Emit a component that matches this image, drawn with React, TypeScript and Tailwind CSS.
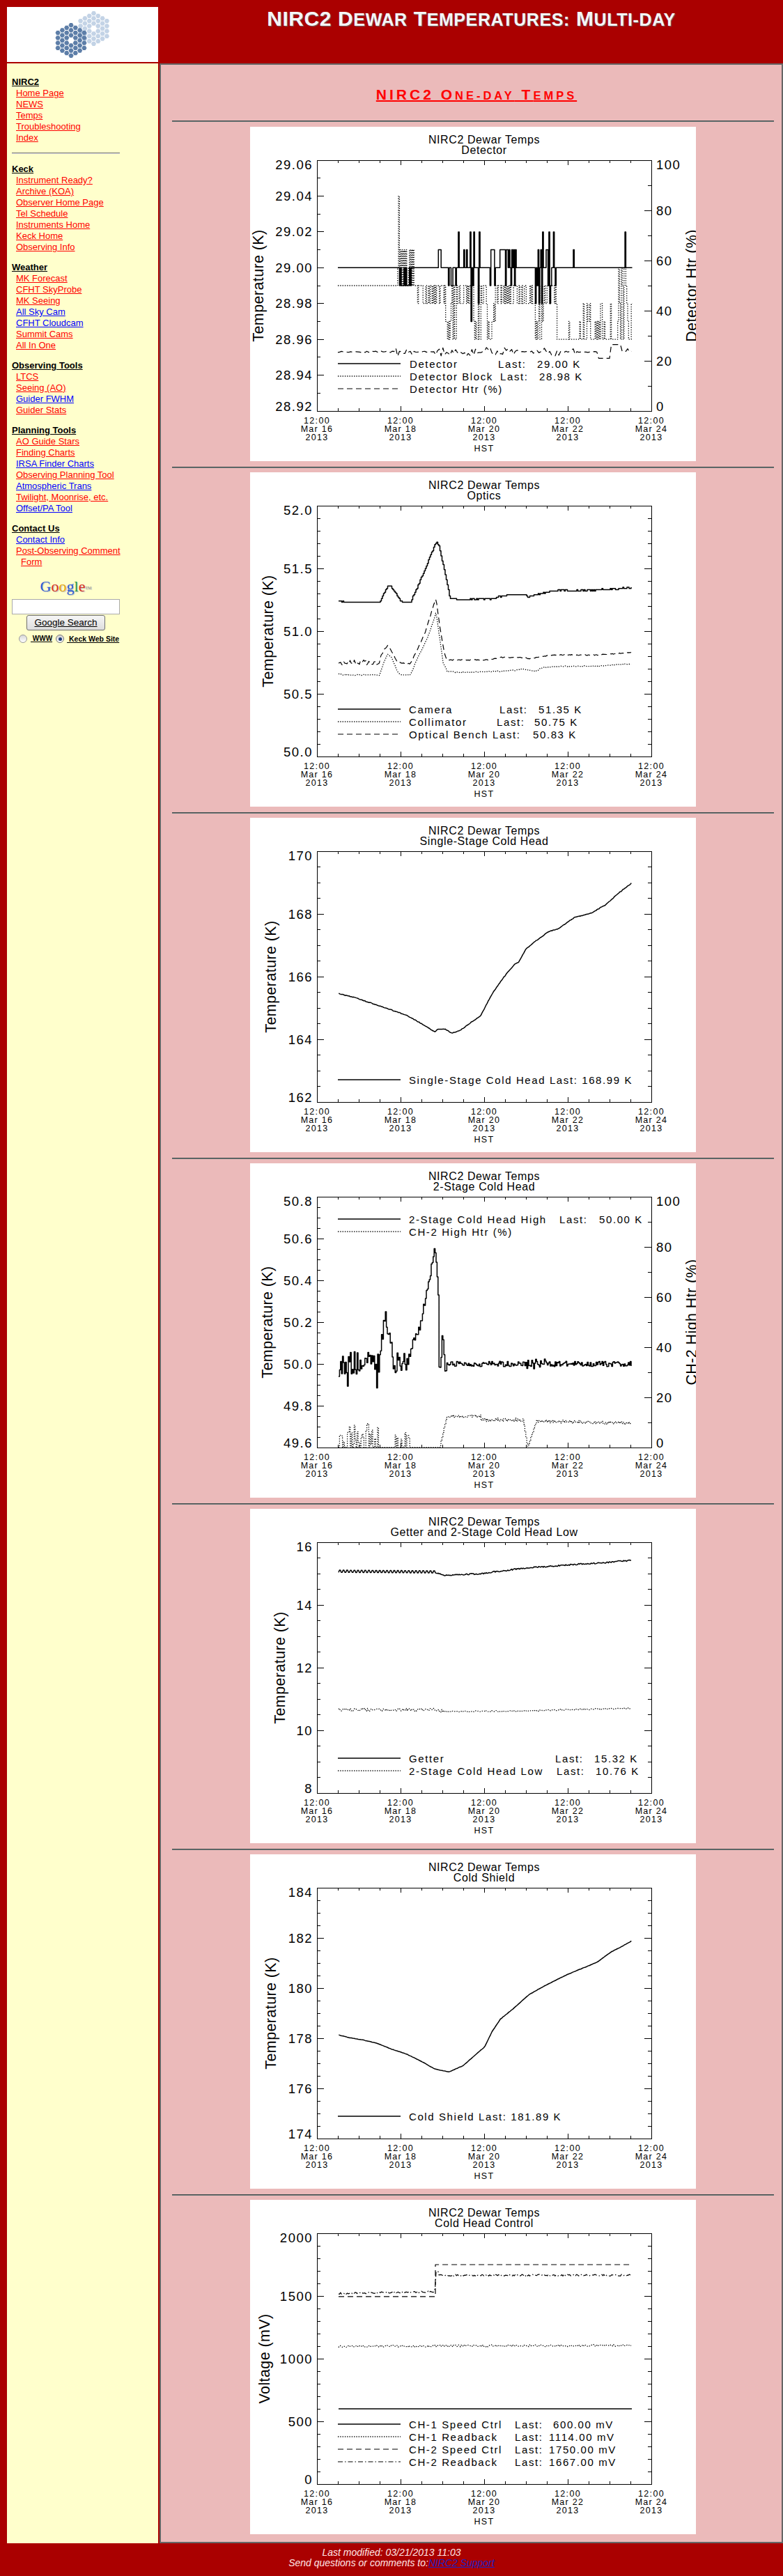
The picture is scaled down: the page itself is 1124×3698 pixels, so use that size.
import React from "react";

const SANS = "'Liberation Sans', Arial, sans-serif";

type P = [number, number];
type St = "s" | "dot" | "dash" | "dd";

const DASH: Record<St, string | undefined> = { s: undefined, dot: "1.3 2", dash: "8 5", dd: "7 3 1.5 3" };
const SW: Record<St, number> = { s: 1.5, dot: 1.3, dash: 1.2, dd: 1.2 };

function rnd(seed: number) {
  let s = seed;
  return () => {
    s = (s * 16807) % 2147483647;
    return (s - 1) / 2147483646;
  };
}

function interp(k: P[], x: number) {
  if (x <= k[0][0]) return k[0][1];
  for (let i = 1; i < k.length; i++) {
    if (x <= k[i][0]) {
      const [x0, y0] = k[i - 1];
      const [x1, y1] = k[i];
      return y0 + ((y1 - y0) * (x - x0)) / (x1 - x0);
    }
  }
  return k[k.length - 1][1];
}

const path = (pts: P[]) =>
  pts.map((p, i) => (i ? "L" : "M") + p[0].toFixed(1) + " " + p[1].toFixed(1)).join("");

const steps = (pts: P[]) => {
  let d = `M${pts[0][0].toFixed(1)} ${pts[0][1].toFixed(1)}`;
  for (let i = 1; i < pts.length; i++) d += `H${pts[i][0].toFixed(1)}V${pts[i][1].toFixed(1)}`;
  return d;
};

const ym = (lo: number, hi: number) => (v: number) => 408 - ((v - lo) / (hi - lo)) * 360;
const pct = (p: number) => 408 - p * 3.6;

function sample(k: P[], step: number, noise: (x: number) => number, map: (v: number) => number): P[] {
  const out: P[] = [];
  for (let x = k[0][0]; x <= k[k.length - 1][0] + 0.01; x += step) out.push([x, map(interp(k, x) + noise(x))]);
  return out;
}

type Series = { d: string; st: St };

// ---------- chart data ----------

function detector(): Series[] {
  const r = rnd(11);
  const y = ym(28.92, 29.06);
  const pick = (a: number[]) => a[Math.floor(r() * a.length)];
  const win: [number, number, number, number[]][] = [
    [211, 231, 0.6, [28.99]],
    [270, 273, 0.9, [29.01]],
    [279, 303, 0.55, [28.99, 28.99, 28.98, 29.01, 29.02]],
    [305, 330, 0.55, [29.01, 29.02, 28.99, 28.98, 28.97]],
    [342, 381, 0.6, [29.01, 29.01, 28.99]],
    [407, 440, 0.5, [28.99, 28.98, 29.01, 29.02, 28.99]],
    [463, 465, 1, [29.01]],
    [537, 539, 1, [29.02]],
  ];
  const det: P[] = [];
  const blk: P[] = [];
  const htr: P[] = [];
  for (let x = 126; x <= 549; x += 1.3) {
    let v = 29.0;
    for (const [a, b, p, o] of win) if (x >= a && x <= b && r() < p) v = pick(o);
    det.push([x, y(v)]);

    let w: number;
    if (x < 240) {
      w = 28.99;
      if (x >= 211 && x <= 236 && r() < 0.55) w = pick([29.0, 29.01, 29.02, 29.01]);
      if (x > 212 && x < 214) w = 29.04;
    } else if (x < 440) {
      w = r() < 0.5 ? 28.98 : 28.99;
      const deep = (x > 280 && x < 296) || (x > 318 && x < 332) || (x > 340 && x < 352) || (x > 408 && x < 420);
      if (deep && r() < 0.6) w = pick([28.96, 28.97]);
    } else {
      w = 28.96;
      if (r() < 0.22) w = pick([28.97, 28.98]);
      if (x > 528 && x < 541 && r() < 0.7) w = pick([28.98, 28.99, 29.0]);
    }
    blk.push([x, y(w)]);

    let h = 23.6 + (r() - 0.5) * 0.5;
    if (win.some(([a, b]) => x >= a - 4 && x <= b + 4)) h += (r() - 0.5) * 3.5;
    if (x > 500 && x < 517) h = 21;
    if (x >= 517 && x < 532) h = 26.5;
    htr.push([x, pct(h)]);
  }
  return [
    { d: steps(det), st: "s" },
    { d: steps(blk), st: "dot" },
    { d: path(htr.filter((_, i) => i % 2 === 0)), st: "dash" },
  ];
}

function optics(): Series[] {
  const r = rnd(5);
  const y = ym(50, 52);
  const q = (v: number) => y(Math.round(v * 100) / 100);
  const cam: P[] = [[127, 51.24], [140, 51.23], [186, 51.23], [192, 51.3], [198, 51.37], [203, 51.35], [212, 51.27], [218, 51.23], [230, 51.23], [240, 51.35], [255, 51.55], [263, 51.66], [267, 51.71], [271, 51.68], [280, 51.45], [287, 51.26], [300, 51.25], [348, 51.26], [354, 51.27], [370, 51.29], [395, 51.29], [400, 51.27], [403, 51.28], [424, 51.31], [448, 51.33], [460, 51.32], [500, 51.33], [548, 51.345]];
  const col: P[] = [[127, 50.66], [135, 50.65], [186, 50.65], [192, 50.75], [198, 50.82], [204, 50.78], [212, 50.67], [218, 50.65], [230, 50.65], [240, 50.78], [255, 50.95], [263, 51.08], [267, 51.15], [272, 50.95], [277, 50.75], [283, 50.68], [300, 50.67], [360, 50.68], [385, 50.69], [393, 50.7], [400, 50.69], [410, 50.68], [420, 50.71], [450, 50.72], [500, 50.72], [548, 50.74]];
  const ben: P[] = [[127, 50.75], [185, 50.75], [192, 50.85], [198, 50.89], [205, 50.82], [212, 50.75], [230, 50.74], [240, 50.85], [252, 51.0], [263, 51.2], [267, 51.26], [272, 51.05], [278, 50.85], [282, 50.77], [340, 50.77], [350, 50.78], [360, 50.79], [395, 50.79], [400, 50.78], [410, 50.79], [420, 50.8], [440, 50.81], [500, 50.81], [548, 50.83]];
  return [
    { d: steps(sample(cam, 1.5, () => (r() - 0.5) * 0.01, q)), st: "s" },
    { d: path(sample(col, 1.5, () => (r() - 0.5) * 0.008, y)), st: "dot" },
    { d: path(sample(ben, 1.5, (x) => (x < 190 ? (r() - 0.5) * 0.04 : (r() - 0.5) * 0.008), y)), st: "dash" },
  ];
}

function singleStage(): Series[] {
  const r = rnd(21);
  const k: P[] = [[127.3, 252.3], [150, 258], [183.7, 269.3], [224.5, 283.3], [245, 295], [265.3, 307.3], [269.4, 303.3], [279.6, 303.3], [289.8, 309.3], [302, 305], [318.4, 292.7], [330.6, 285], [347, 253.3], [363.3, 230], [379.6, 210], [385.7, 207], [396, 188.3], [408.2, 178.3], [428.6, 163.3], [442.9, 159.3], [453, 151.7], [465.3, 143.3], [489.8, 136.7], [510.2, 125], [530.6, 106.7], [548.2, 93.3]];
  return [{ d: path(sample(k, 1.5, () => (r() - 0.5) * 0.9, (v) => v)), st: "s" }];
}

function twoStage(): Series[] {
  const r = rnd(3);
  const y = ym(49.6, 50.8);
  const k: P[] = [[127, 50.0], [185, 50.0], [190, 50.15], [194, 50.21], [200, 50.1], [205, 50.02], [228, 50.0], [232, 50.08], [245, 50.2], [255, 50.38], [262, 50.5], [265, 50.58], [268, 50.45], [270, 50.3], [271, 49.96], [273, 49.98], [275, 50.13], [277, 50.1], [280, 49.95], [283, 50.0], [548, 50.0]];
  const s = sample(k, 1.4, (x) => {
    if (x < 230) {
      let n = (r() - 0.5) * 0.12;
      if (r() < 0.08) n -= 0.1 * r();
      return n;
    }
    if (x < 285) return (r() - 0.5) * 0.05;
    if (x > 396 && x < 424) return (r() - 0.5) * 0.05;
    return (r() - 0.5) * 0.025;
  }, y);
  const h: P[] = [];
  for (let x = 127; x <= 548; x += 1.4) {
    let p = 0;
    if (x < 185) p = r() < 0.5 ? r() * 9.5 : 0;
    else if (x > 207 && x < 230) p = r() < 0.4 ? r() * 7.5 : 0;
    else if (x >= 272 && x < 282) p = ((x - 272) / 10) * 12.5;
    else if (x >= 282 && x < 330) p = 12.5 + (r() - 0.5) * 1;
    else if (x >= 330 && x < 392) p = 11 + (r() - 0.5) * 1.4;
    else if (x >= 392 && x < 398) p = 11 * (1 - (x - 392) / 6);
    else if (x >= 398 && x < 410) p = ((x - 398) / 12) * 10;
    else if (x >= 410) p = 10.6 - ((x - 410) / 138) * 1 + (r() - 0.5) * 1.2;
    h.push([x, pct(p)]);
  }
  return [
    { d: steps(s), st: "s" },
    { d: steps(h), st: "dot" },
  ];
}

function getter(): Series[] {
  const r = rnd(8);
  const y = ym(8, 16);
  const g: P[] = [[127, 15.07], [265, 15.05], [278, 14.95], [290, 14.96], [335, 15.0], [347, 15.05], [367, 15.1], [384, 15.15], [408, 15.2], [441, 15.25], [469, 15.3], [510, 15.35], [530, 15.4], [548, 15.42]];
  const l: P[] = [[127, 10.66], [265, 10.66], [280, 10.6], [400, 10.62], [440, 10.65], [548, 10.7]];
  return [
    { d: path(sample(g, 1.3, (x) => (x < 265 ? (Math.floor(x / 2.6) % 2 ? 0.04 : -0.03) : (r() - 0.5) * 0.04), y)), st: "s" },
    { d: path(sample(l, 1.3, (x) => (x < 280 ? (r() - 0.5) * 0.1 : (r() - 0.5) * 0.04), y)), st: "dot" },
  ];
}

function coldShield(): Series[] {
  const r = rnd(14);
  const k: P[] = [[127.3, 259.3], [142.9, 263.3], [163.3, 266.7], [183.7, 271.7], [204, 280], [224.5, 286.7], [245, 296.7], [265.3, 308.3], [285.7, 312.3], [306, 303.3], [326.5, 285], [336.7, 276.7], [347, 255], [359.2, 236.7], [379.6, 220], [400, 201.7], [420.4, 190], [436.7, 181.7], [457.1, 171.7], [473.5, 165], [498, 155], [518.4, 140], [534.7, 131.7], [548.2, 124]];
  return [{ d: path(sample(k, 2, () => (r() - 0.5) * 0.4, (v) => v)), st: "s" }];
}

function headControl(): Series[] {
  const r = rnd(9);
  const y = ym(0, 2000);
  const rb1: P[] = [];
  const rb2: P[] = [];
  for (let x = 127; x <= 548; x += 1.4) {
    rb1.push([x, y(1098 + (x - 127) * 0.02 + (r() - 0.5) * 16)]);
    const base = x < 266 ? 1520 + (x - 127) * 0.1 : 1665;
    rb2.push([x, y(base + (r() - 0.5) * 14 + (x > 265 && x < 270 ? 30 : 0))]);
  }
  return [
    { d: `M127 ${y(600)}H548`, st: "s" },
    { d: path(rb1), st: "dot" },
    { d: `M127 ${y(1495)}H266V${y(1750)}H548`, st: "dash" },
    { d: path(rb2), st: "dd" },
  ];
}

// ---------- plot ----------

type Leg = { st: St; y: number; t: [number, string][] };
type Cfg = {
  sub: string;
  yt: string;
  ytx: number;
  lo: number;
  hi: number;
  major: number;
  minor: number;
  fmt: (v: number) => string;
  rt?: string;
  legend: Leg[];
  data: Series[];
};

function T({ x, y, s, ls = 0, a = "start", rot, children }: { x: number; y: number; s: number; ls?: number; a?: "start" | "middle" | "end"; rot?: boolean; children: React.ReactNode }) {
  return (
    <text
      x={x}
      y={y}
      fontSize={s}
      textAnchor={a}
      fill="#000"
      style={{ letterSpacing: `${ls}px` }}
      transform={rot ? `rotate(-90 ${x} ${y})` : undefined}
    >
      {children}
    </text>
  );
}

function Plot({ c }: { c: Cfg }) {
  const n = Math.round((c.hi - c.lo) / c.minor);
  const per = Math.round(c.major / c.minor);
  let ticks = "";
  const ylabels: React.ReactNode[] = [];
  for (let i = 0; i <= n; i++) {
    const yy = 408 - (i / n) * 360;
    const maj = i % per === 0;
    const len = maj ? 10 : 5;
    ticks += `M96 ${yy.toFixed(1)}h${len}`;
    if (!c.rt) ticks += `M576 ${yy.toFixed(1)}h${-len}`;
    if (maj) {
      const by = i === 0 ? 408 : i === n ? 61.3 : yy + 6.6;
      ylabels.push(
        <T key={i} x={90} y={by} s={18.5} ls={1.5} a="end">
          {c.fmt(c.lo + i * c.minor)}
        </T>
      );
    }
  }
  const rlabels: React.ReactNode[] = [];
  if (c.rt) {
    for (let p = 0; p <= 100; p += 10) {
      const yy = pct(p);
      const maj = p % 20 === 0;
      ticks += `M576 ${yy.toFixed(1)}h${maj ? -10 : -5}`;
      if (maj) {
        const by = p === 0 ? 408 : p === 100 ? 61.3 : yy + 6.6;
        rlabels.push(
          <T key={p} x={583} y={by} s={18.5} ls={1.5}>
            {String(p)}
          </T>
        );
      }
    }
  }
  for (let k = 0; k <= 16; k++) {
    const x = 96 + 30 * k;
    const len = k % 4 === 0 ? 7 : 4;
    ticks += `M${x} 408v${-len}M${x} 48v${len}`;
  }
  const xl = [0, 1, 2, 3, 4];

  return (
    <svg width={640} height={480} className="mx-auto block bg-white" style={{ fontFamily: SANS }}>
      <T x={336} y={23.5} s={16} ls={0.6} a="middle">
        NIRC2 Dewar Temps
      </T>
      <T x={336} y={38.5} s={16} ls={0.6} a="middle">
        {c.sub}
      </T>
      <g shapeRendering="crispEdges" stroke="#000" strokeWidth={1} fill="none">
        <rect x={96} y={48} width={480} height={360} />
        <path d={ticks} />
      </g>
      {ylabels}
      {rlabels}
      {xl.map((k) => (
        <g key={k}>
          <T x={96 + 120 * k} y={426} s={12.5} ls={1.3} a="middle">
            12:00
          </T>
          <T x={96 + 120 * k} y={438} s={12.5} ls={1.3} a="middle">
            {`Mar ${16 + 2 * k}`}
          </T>
          <T x={96 + 120 * k} y={449.5} s={12.5} ls={1.3} a="middle">
            2013
          </T>
        </g>
      ))}
      <T x={336} y={466} s={12.5} ls={1.3} a="middle">
        HST
      </T>
      <T x={c.ytx} y={228} s={21.5} ls={0.4} a="middle" rot>
        {c.yt}
      </T>
      {c.rt && (
        <T x={641} y={228} s={21.5} ls={0.4} a="middle" rot>
          {c.rt}
        </T>
      )}
      <g fill="none" stroke="#000" strokeLinejoin="round">
        {c.data.map((s, i) => (
          <path key={i} d={s.d} strokeWidth={SW[s.st]} strokeDasharray={DASH[s.st]} />
        ))}
        {c.legend.map((l, i) => (
          <path key={i} d={`M126 ${l.y}H216`} strokeWidth={SW[l.st]} strokeDasharray={DASH[l.st]} />
        ))}
      </g>
      {c.legend.map((l, i) =>
        l.t.map(([x, s], j) => (
          <T key={`${i}-${j}`} x={x} y={l.y + 5.5} s={15} ls={1.6}>
            {s}
          </T>
        ))
      )}
    </svg>
  );
}

const f2 = (v: number) => v.toFixed(2);
const f1 = (v: number) => v.toFixed(1);
const f0 = (v: number) => String(Math.round(v));

const PLOTS: Cfg[] = [
  {
    sub: "Detector",
    yt: "Temperature (K)",
    ytx: 19,
    lo: 28.92,
    hi: 29.06,
    major: 0.02,
    minor: 0.01,
    fmt: f2,
    rt: "Detector Htr (%)",
    legend: [
      { st: "s", y: 340, t: [[229, "Detector"], [356, "Last:"], [412, "29.00 K"]] },
      { st: "dot", y: 358, t: [[229, "Detector Block"], [359, "Last:"], [415, "28.98 K"]] },
      { st: "dash", y: 376, t: [[229, "Detector Htr (%)"]] },
    ],
    data: detector(),
  },
  {
    sub: "Optics",
    yt: "Temperature (K)",
    ytx: 32.5,
    lo: 50,
    hi: 52,
    major: 0.5,
    minor: 0.1,
    fmt: f1,
    legend: [
      { st: "s", y: 340, t: [[228, "Camera"], [358, "Last:"], [414, "51.35 K"]] },
      { st: "dot", y: 358, t: [[228, "Collimator"], [354, "Last:"], [408, "50.75 K"]] },
      { st: "dash", y: 376, t: [[228, "Optical Bench"], [348, "Last:"], [406, "50.83 K"]] },
    ],
    data: optics(),
  },
  {
    sub: "Single-Stage Cold Head",
    yt: "Temperature (K)",
    ytx: 36.7,
    lo: 162,
    hi: 170,
    major: 2,
    minor: 0.5,
    fmt: f0,
    legend: [{ st: "s", y: 376, t: [[228, "Single-Stage Cold Head Last: 168.99 K"]] }],
    data: singleStage(),
  },
  {
    sub: "2-Stage Cold Head",
    yt: "Temperature (K)",
    ytx: 31.8,
    lo: 49.6,
    hi: 50.8,
    major: 0.2,
    minor: 0.05,
    fmt: f1,
    rt: "CH-2 High Htr (%)",
    legend: [
      { st: "s", y: 80, t: [[228, "2-Stage Cold Head High"], [444, "Last:"], [501, "50.00 K"]] },
      { st: "dot", y: 98, t: [[228, "CH-2 High Htr (%)"]] },
    ],
    data: twoStage(),
  },
  {
    sub: "Getter and 2-Stage Cold Head Low",
    yt: "Temperature (K)",
    ytx: 49.8,
    lo: 8,
    hi: 16,
    major: 2,
    minor: 0.5,
    fmt: f0,
    legend: [
      { st: "s", y: 358, t: [[228, "Getter"], [438, "Last:"], [494, "15.32 K"]] },
      { st: "dot", y: 376, t: [[228, "2-Stage Cold Head Low"], [440, "Last:"], [496, "10.76 K"]] },
    ],
    data: getter(),
  },
  {
    sub: "Cold Shield",
    yt: "Temperature (K)",
    ytx: 36.7,
    lo: 174,
    hi: 184,
    major: 2,
    minor: 0.5,
    fmt: f0,
    legend: [{ st: "s", y: 376, t: [[228, "Cold Shield Last: 181.89 K"]] }],
    data: coldShield(),
  },
  {
    sub: "Cold Head Control",
    yt: "Voltage (mV)",
    ytx: 27.7,
    lo: 0,
    hi: 2000,
    major: 500,
    minor: 100,
    fmt: f0,
    legend: [
      { st: "s", y: 322, t: [[228, "CH-1 Speed Ctrl"], [380, "Last:"], [435, "600.00 mV"]] },
      { st: "dot", y: 340, t: [[228, "CH-1 Readback"], [380, "Last:"], [429, "1114.00 mV"]] },
      { st: "dash", y: 358, t: [[228, "CH-2 Speed Ctrl"], [380, "Last:"], [429, "1750.00 mV"]] },
      { st: "dd", y: 376, t: [[228, "CH-2 Readback"], [380, "Last:"], [429, "1667.00 mV"]] },
    ],
    data: headControl(),
  },
];

// ---------- logo ----------

function hexCluster(cx: number, cy: number, s: number) {
  const out: string[] = [];
  for (let q = -3; q <= 3; q++) {
    for (let r = -3; r <= 3; r++) {
      const d = Math.max(Math.abs(q), Math.abs(r), Math.abs(-q - r));
      if (d === 0 || d > 3) continue;
      const x = cx + s * 1.5 * q;
      const y = cy + s * Math.sqrt(3) * (r + q / 2);
      const rr = s * 0.86;
      const pts = [0, 1, 2, 3, 4, 5]
        .map((i) => `${(x + rr * Math.cos((Math.PI / 3) * i)).toFixed(2)},${(y + rr * Math.sin((Math.PI / 3) * i)).toFixed(2)}`)
        .join(" ");
      out.push(pts);
    }
  }
  return out;
}

function Logo() {
  const light = hexCluster(124.5, 31, 4.2);
  const dark = hexCluster(92, 48, 4.2);
  return (
    <svg width={217} height={79} className="block">
      {light.map((p, i) => (
        <polygon key={`l${i}`} points={p} fill="#c3d3e6" />
      ))}
      {dark.map((p, i) => (
        <polygon key={`d${i}`} points={p} fill="#5d7ea8" />
      ))}
    </svg>
  );
}

// ---------- sidebar ----------

const NAV: { h: string; links: [string, "r" | "b"][] }[] = [
  { h: "NIRC2", links: [["Home Page", "r"], ["NEWS", "r"], ["Temps", "r"], ["Troubleshooting", "r"], ["Index", "r"]] },
  { h: "Keck", links: [["Instrument Ready?", "r"], ["Archive (KOA)", "r"], ["Observer Home Page", "r"], ["Tel Schedule", "r"], ["Instruments Home", "r"], ["Keck Home", "r"], ["Observing Info", "r"]] },
  { h: "Weather", links: [["MK Forecast", "r"], ["CFHT SkyProbe", "r"], ["MK Seeing", "r"], ["All Sky Cam", "b"], ["CFHT Cloudcam", "b"], ["Summit Cams", "r"], ["All In One", "r"]] },
  { h: "Observing Tools", links: [["LTCS", "r"], ["Seeing (AO)", "r"], ["Guider FWHM", "b"], ["Guider Stats", "r"]] },
  { h: "Planning Tools", links: [["AO Guide Stars", "r"], ["Finding Charts", "r"], ["IRSA Finder Charts", "b"], ["Observing Planning Tool", "r"], ["Atmospheric Trans", "b"], ["Twilight, Moonrise, etc.", "r"], ["Offset/PA Tool", "b"]] },
  { h: "Contact Us", links: [["Contact Info", "b"], ["Post-Observing Comment Form", "r"]] },
];

function Group({ g, first }: { g: (typeof NAV)[number]; first?: boolean }) {
  return (
    <div className={first ? "" : "mt-[13px]"}>
      <div className="font-bold text-black underline">{g.h}</div>
      {g.links.map(([t, c]) => (
        <a
          key={t}
          href="#"
          className={`block pl-[13px] indent-[-7px] underline ${c === "r" ? "text-[#ff0000]" : "text-[#0000ff]"}`}
        >
          {t}
        </a>
      ))}
    </div>
  );
}

function Sidebar() {
  return (
    <aside className="ml-[10px] w-[217px] shrink-0 bg-[#ffffcc] pl-[7px] pt-[19px] text-[13px] leading-[16px]">
      <div className="w-[168px]">
        <Group g={NAV[0]} first />
        <div className="mb-[14px] mt-[13px] h-[2px] w-[155px] border-t border-[#777] bg-[#dcdcdc]" />
        <Group g={NAV[1]} first />
        {NAV.slice(2).map((g) => (
          <Group key={g.h} g={g} />
        ))}
      </div>
      <div className="w-[155px]">
        <div
          className="mt-[15px] text-center text-[22px] leading-[24px] [text-shadow:1px_1px_1px_#bbb]"
          style={{ fontFamily: "'Liberation Serif', 'Times New Roman', serif" }}
        >
          <span className="text-[#2a5bd7]">G</span>
          <span className="text-[#d8311f]">o</span>
          <span className="text-[#e9a906]">o</span>
          <span className="text-[#2a5bd7]">g</span>
          <span className="text-[#2c9a3f]">l</span>
          <span className="text-[#d8311f]">e</span>
          <sup className="text-[6px] text-[#888]">TM</sup>
        </div>
        <div className="mt-[6px] h-[22px] w-[155px] border border-[#aaa] bg-white" />
        <div className="mt-[1px] flex justify-center">
          <button className="h-[22px] w-[113px] rounded-[3px] border border-[#707070] bg-gradient-to-b from-[#f6f6f6] to-[#dddddd] text-[13.5px] leading-[20px] text-black underline">
            Google Search
          </button>
        </div>
        <div className="mt-[5px] flex h-[14px] items-center pl-[10px] text-[10px] font-bold text-black">
          <span className="h-[12px] w-[12px] rounded-full border border-[#999] bg-gradient-to-b from-[#d8d8d8] to-white" />
          <span className="ml-[5px] underline">&nbsp;WWW</span>
          <span className="ml-[5px] flex h-[12px] w-[12px] items-center justify-center rounded-full border border-[#777] bg-gradient-to-b from-[#d0d0d0] to-white">
            <span className="h-[5px] w-[5px] rounded-full bg-[#1f3f7a]" />
          </span>
          <span className="ml-[4px] text-[10.5px] underline">&nbsp;Keck Web Site</span>
        </div>
      </div>
    </aside>
  );
}

// ---------- page ----------

function Hr() {
  return <div className="h-[2px] border-t border-[#444e4e] bg-[#6f7a7a]" />;
}

export default function App() {
  return (
    <div className="min-h-[3698px] w-full bg-[#aa0000] pt-[10px]" style={{ fontFamily: SANS }}>
      <div className="flex">
        <div className="ml-[10px] h-[79px] w-[217px] shrink-0 bg-white">
          <Logo />
        </div>
        <div className="ml-[2px] flex-1 pt-[2px] text-center">
          <h1 className="font-bold leading-[30px] tracking-[0.6px] text-[#f6f6f6] [text-shadow:1px_1px_1px_#6a6a6a]">
            <span className="text-[30px]">NIRC2 D</span>
            <span className="text-[25px]">EWAR</span>
            <span className="text-[30px]"> T</span>
            <span className="text-[25px]">EMPERATURES:</span>
            <span className="text-[30px]"> M</span>
            <span className="text-[25px]">ULTI-DAY</span>
          </h1>
        </div>
      </div>

      <div className="mt-[2px] flex">
        <Sidebar />
        <main className="ml-[2px] flex-1 border-2 border-[#666] bg-[#ebbaba] pb-[11px] pl-[16px] pr-[11px] pt-[31px]">
          <h2 className="pl-[10px] text-center font-bold leading-[24px] tracking-[4px] text-[#ff0000]">
            <span className="underline decoration-2 underline-offset-[1px]">
              <span className="text-[21px]">NIRC2 O</span>
              <span className="text-[16.5px]">NE-DAY</span>
              <span className="text-[21px]"> T</span>
              <span className="text-[16.5px]">EMPS</span>
            </span>
          </h2>
          <div className="mt-[23px]">
            <Hr />
          </div>
          <div className="mt-[7px]">
            {PLOTS.map((c, i) => (
              <div key={c.sub}>
                {i > 0 && (
                  <div className="mb-[6px] mt-[8px]">
                    <Hr />
                  </div>
                )}
                <Plot c={c} />
              </div>
            ))}
          </div>
        </main>
      </div>

      <footer className="pt-[6px] text-center text-[14px] italic leading-[15px] text-[#ffe6e6]">
        <div>Last modified: 03/21/2013 11:03</div>
        <div>
          Send questions or comments to:
          <a href="#" className="text-[#2020c0] underline">
            NIRC2 Support
          </a>
        </div>
      </footer>
    </div>
  );
}
